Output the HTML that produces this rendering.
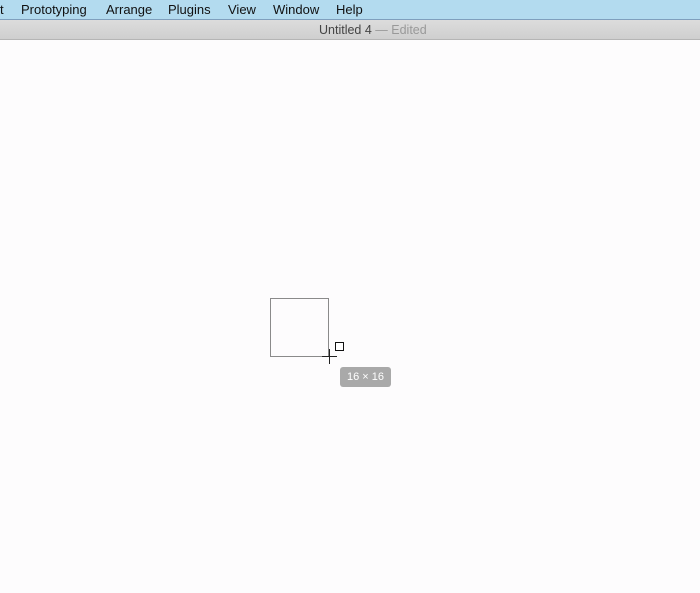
<!DOCTYPE html>
<html><head><style>
html,body{margin:0;padding:0;width:700px;height:593px;overflow:hidden;background:#fdfcfd;font-family:"Liberation Sans",sans-serif;}
.menu{position:absolute;left:0;top:0;width:700px;height:19px;background:#b3dbef;border-bottom:1px solid #7f9fbd;font-size:13px;color:#111;}
.menu span{position:absolute;top:2px;}
.title{position:absolute;left:0;top:20px;width:700px;height:19px;background:linear-gradient(#dcdcdc,#cfcfcf);border-bottom:1px solid #b5b5b5;font-size:12.5px;color:#444;}
.title span{position:absolute;left:319px;top:3px;}
.title i{font-style:normal;color:#999;}
.sq{position:absolute;left:270px;top:298px;width:57px;height:57px;border:1px solid #8a8a8a;}
.h{position:absolute;left:335px;top:342px;width:7px;height:7px;border:1px solid #111;background:#fff;}
.tip{position:absolute;left:340px;top:367px;width:51px;height:20px;background:#a9a9a9;border-radius:3px;color:#fff;font-size:11px;text-align:center;line-height:20px;}
</style></head><body>
<div class="menu">
<span style="left:0">t</span>
<span style="left:21px">Prototyping</span>
<span style="left:106px">Arrange</span>
<span style="left:168px">Plugins</span>
<span style="left:228px">View</span>
<span style="left:273px">Window</span>
<span style="left:336px">Help</span>
</div>
<div class="title"><span>Untitled 4 <i>— Edited</i></span></div>
<div class="sq"></div>
<svg style="position:absolute;left:320px;top:347px" width="20" height="20"><path d="M9.5 2V17M2 9.5H17" stroke="#222" stroke-width="1"/></svg>
<div class="h"></div>
<div class="tip">16 × 16</div>
</body></html>
